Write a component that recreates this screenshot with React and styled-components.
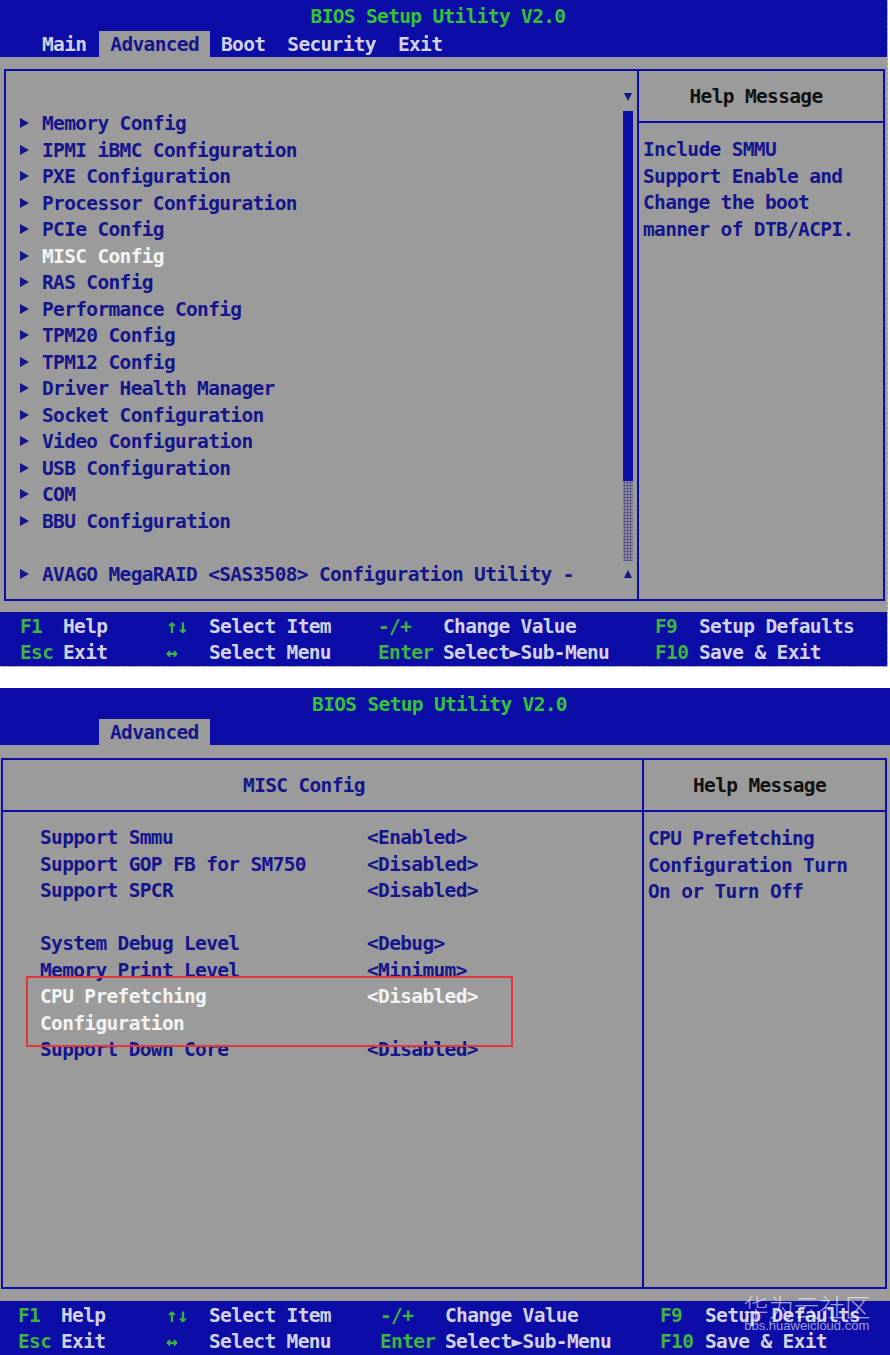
import React from "react";
import styled, { createGlobalStyle, css } from "styled-components";

const C = {
  blue: "#0c0ca6",
  gray: "#9b9b9b",
  navy: "#15158c",
  white: "#f3f3f3",
  pale: "#d2d2e0",
  title: "#33c433",
  key: "#3db43d",
  ink: "#121212",
  mark: "#e2363a",
};

const ROW = 26.5;

const GlobalStyle = createGlobalStyle`
  html, body { margin: 0; padding: 0; background: #ffffff; }
  body {
    font-family: "DejaVu Sans Mono", "Liberation Mono", monospace;
  }
`;

const Page = styled.div`
  width: 890px;
  height: 1355px;
  overflow: hidden;
  display: flex;
  flex-direction: column;
  gap: 21px;
  font-size: 19.5px;
  font-weight: bold;
  letter-spacing: -0.66px;
`;

const Screen = styled.section`
  position: relative;
  flex: none;
  width: ${(p) => p.$w}px;
  height: 667px;
  box-sizing: border-box;
  display: flex;
  flex-direction: column;
  background: ${C.gray};
  overflow: hidden;
  ${(p) =>
    p.$framed &&
    css`
      border-right: 1px dashed #b9b9c2;
      border-bottom: 1px dashed #b9b9c2;
    `}
`;

const Header = styled.header`
  flex: none;
  background: ${C.blue};
  display: flex;
  flex-direction: column;
`;

const Title = styled.div`
  height: 31px;
  padding: 2px 11px 0 0;
  box-sizing: border-box;
  line-height: 29px;
  text-align: center;
  color: ${C.title};
  white-space: pre;
`;

const TabRow = styled.nav`
  height: 26px;
  display: flex;
  align-items: stretch;
  padding-left: ${(p) => p.$indent}px;
`;

const Tab = styled.span`
  padding: 0 11px;
  line-height: 27px;
  white-space: pre;
  color: ${(p) => (p.$active ? C.navy : C.pale)};
  background: ${(p) => (p.$active ? C.gray : "transparent")};
  margin-left: ${(p) => (p.$active ? 2 : 0)}px;
`;

const Body = styled.main`
  flex: 1;
  min-height: 0;
  display: flex;
  padding: ${(p) => p.$pad};
`;

const Frame = styled.div`
  flex: 1;
  display: grid;
  grid-template-columns: ${(p) => p.$left}px 1fr;
  border: 2px solid ${C.blue};
`;

const MenuPane = styled.div`
  display: grid;
  grid-template-columns: 1fr 16px;
  padding-right: 1px;
`;

const MenuList = styled.ul`
  list-style: none;
  margin: 0;
  padding: ${13 + ROW}px 0 0 14px;
`;

const MenuItem = styled.li`
  height: ${ROW}px;
  display: flex;
  align-items: center;
  white-space: pre;
  color: ${(p) => (p.$active ? C.white : C.navy)};
`;

const Pointer = styled.span`
  flex: none;
  width: 0;
  height: 0;
  margin: 0 13px 1px 0;
  border-left: 9px solid ${C.navy};
  border-top: 5.5px solid transparent;
  border-bottom: 5.5px solid transparent;
`;

const Scroll = styled.div`
  display: flex;
  flex-direction: column;
  align-items: center;
  padding-top: 13px;
`;

const ArrowCell = styled.div`
  height: ${ROW}px;
  display: flex;
  align-items: center;
  justify-content: center;
`;

const Arrow = styled.span`
  width: 0;
  height: 0;
  border-left: 4.5px solid transparent;
  border-right: 4.5px solid transparent;
  ${(p) =>
    p.$up
      ? css`
          border-bottom: 8px solid ${C.navy};
        `
      : css`
          border-top: 8px solid ${C.navy};
        `}
`;

const Thumb = styled.div`
  width: 10px;
  height: 370px;
  background: ${C.blue};
`;

const Track = styled.div`
  width: 10px;
  height: 80px;
  background-color: #8e8e9c;
  background-image: radial-gradient(circle, #3c3c84 0.9px, transparent 1.1px);
  background-size: 3px 3px;
`;

const Pane = styled.div`
  display: flex;
  flex-direction: column;
  ${(p) =>
    p.$divided &&
    css`
      border-left: 2px solid ${C.blue};
    `}
`;

const PaneHead = styled.div`
  height: 50px;
  flex: none;
  display: flex;
  align-items: center;
  justify-content: center;
  padding-right: ${(p) => p.$shift}px;
  border-bottom: 2px solid ${C.blue};
  color: ${(p) => (p.$dark ? C.ink : C.navy)};
  white-space: pre;
`;

const HelpText = styled.div`
  padding: 14px 0 0 4px;
  color: ${C.navy};
`;

const Line = styled.div`
  height: ${ROW}px;
  line-height: ${ROW}px;
  white-space: pre;
`;

const SettingList = styled.div`
  padding: 13px 0 0 37px;
  display: grid;
  grid-template-columns: 327px 1fr;
  grid-auto-rows: ${ROW}px;
  align-items: center;
`;

const SettingLabel = styled.div`
  grid-column: 1;
  grid-row: span ${(p) => p.$span || 1};
  align-self: stretch;
  white-space: pre;
  line-height: ${ROW}px;
  color: ${(p) => (p.$active ? C.white : C.navy)};
`;

const SettingValue = styled.div`
  grid-column: 2;
  align-self: start;
  white-space: pre;
  line-height: ${ROW}px;
  color: ${(p) => (p.$active ? C.white : C.navy)};
`;

const Gap = styled.div`
  grid-column: 1 / -1;
`;

const Footer = styled.footer`
  flex: none;
  height: ${(p) => p.$h}px;
  box-sizing: border-box;
  background: ${C.blue};
  padding: 1px 0 0 ${(p) => p.$indent}px;
  display: grid;
  grid-template-columns: ${(p) => p.$cols};
  grid-auto-rows: 26px;
  align-items: center;
  white-space: pre;
`;

const Key = styled.span`
  color: ${C.key};
`;

const Desc = styled.span`
  color: ${C.pale};
`;

const Marker = styled.div`
  position: absolute;
  left: 26px;
  top: 288px;
  width: 487px;
  height: 71px;
  box-sizing: border-box;
  border: 2px solid ${C.mark};
  pointer-events: none;
`;

const Watermark = styled.div`
  position: absolute;
  left: 743px;
  top: 604px;
  display: flex;
  flex-direction: column;
  align-items: center;
  color: rgba(255, 255, 255, 0.6);
  font-weight: normal;
  letter-spacing: 0;
  pointer-events: none;
`;

const MarkTitle = styled.span`
  font-family: "Noto Sans CJK SC", "Noto Sans", sans-serif;
  font-size: 25.5px;
  font-weight: 300;
  line-height: 27px;
`;

const MarkUrl = styled.span`
  font-family: "Liberation Sans", Arial, sans-serif;
  font-size: 13px;
  line-height: 14px;
`;

const MENU = [
  "Memory Config",
  "IPMI iBMC Configuration",
  "PXE Configuration",
  "Processor Configuration",
  "PCIe Config",
  "MISC Config",
  "RAS Config",
  "Performance Config",
  "TPM20 Config",
  "TPM12 Config",
  "Driver Health Manager",
  "Socket Configuration",
  "Video Configuration",
  "USB Configuration",
  "COM",
  "BBU Configuration",
  null,
  "AVAGO MegaRAID <SAS3508> Configuration Utility -",
];

const SETTINGS = [
  { label: "Support Smmu", value: "<Enabled>" },
  { label: "Support GOP FB for SM750", value: "<Disabled>" },
  { label: "Support SPCR", value: "<Disabled>" },
  null,
  { label: "System Debug Level", value: "<Debug>" },
  { label: "Memory Print Level", value: "<Minimum>" },
  { label: "CPU Prefetching\nConfiguration", value: "<Disabled>", rows: 2, active: true },
  { label: "Support Down Core", value: "<Disabled>" },
];

const KEYS = [
  ["F1", "Help", "↑↓", "Select Item", "-/+", "Change Value", "F9", "Setup Defaults"],
  ["Esc", "Exit", "↔", "Select Menu", "Enter", "Select►Sub-Menu", "F10", "Save & Exit"],
];

function KeyBar({ cols, indent, h }) {
  return (
    <Footer $cols={cols} $indent={indent} $h={h}>
      {KEYS.flat().map((t, i) =>
        i % 2 === 0 ? <Key key={i}>{t}</Key> : <Desc key={i}>{t}</Desc>
      )}
    </Footer>
  );
}

function MainScreen() {
  return (
    <Screen $w={888} $framed>
      <Header>
        <Title>BIOS Setup Utility V2.0</Title>
        <TabRow $indent={31}>
          <Tab>Main</Tab>
          <Tab $active>Advanced</Tab>
          <Tab>Boot</Tab>
          <Tab>Security</Tab>
          <Tab>Exit</Tab>
        </TabRow>
      </Header>
      <Body $pad="12px 2px 11px 4px">
        <Frame $left={631}>
          <MenuPane>
            <MenuList>
              {MENU.map((m, i) => (
                <MenuItem key={i} $active={m === "MISC Config"}>
                  {m && <Pointer />}
                  {m}
                </MenuItem>
              ))}
            </MenuList>
            <Scroll>
              <ArrowCell>
                <Arrow />
              </ArrowCell>
              <Thumb />
              <Track />
              <ArrowCell>
                <Arrow $up />
              </ArrowCell>
            </Scroll>
          </MenuPane>
          <Pane $divided>
            <PaneHead $dark $shift={10}>Help Message</PaneHead>
            <HelpText>
              <Line>Include SMMU</Line>
              <Line>Support Enable and</Line>
              <Line>Change the boot</Line>
              <Line>manner of DTB/ACPI.</Line>
            </HelpText>
          </Pane>
        </Frame>
      </Body>
      <KeyBar cols="43px 103px 43px 169px 65px 212px 44px 1fr" indent={20} h={54} />
    </Screen>
  );
}

function MiscScreen() {
  return (
    <Screen $w={890}>
      <Header>
        <Title>BIOS Setup Utility V2.0</Title>
        <TabRow $indent={97}>
          <Tab $active>Advanced</Tab>
        </TabRow>
      </Header>
      <Body $pad="13px 3px 12px 1px">
        <Frame $left={639}>
          <Pane>
            <PaneHead $shift={37}>MISC Config</PaneHead>
            <SettingList>
              {SETTINGS.map((s, i) =>
                s ? (
                  <React.Fragment key={i}>
                    <SettingLabel $span={s.rows} $active={s.active}>
                      {s.label}
                    </SettingLabel>
                    <SettingValue $active={s.active}>{s.value}</SettingValue>
                  </React.Fragment>
                ) : (
                  <Gap key={i} />
                )
              )}
            </SettingList>
          </Pane>
          <Pane $divided>
            <PaneHead $dark $shift={10}>Help Message</PaneHead>
            <HelpText>
              <Line>CPU Prefetching</Line>
              <Line>Configuration Turn</Line>
              <Line>On or Turn Off</Line>
            </HelpText>
          </Pane>
        </Frame>
      </Body>
      <KeyBar cols="43px 105px 43px 171px 65px 215px 45px 1fr" indent={18} h={54} />
      <Marker />
      <Watermark>
        <MarkTitle>华为云社区</MarkTitle>
        <MarkUrl>bbs.huaweicloud.com</MarkUrl>
      </Watermark>
    </Screen>
  );
}

export default function App() {
  return (
    <>
      <GlobalStyle />
      <Page>
        <MainScreen />
        <MiscScreen />
      </Page>
    </>
  );
}
